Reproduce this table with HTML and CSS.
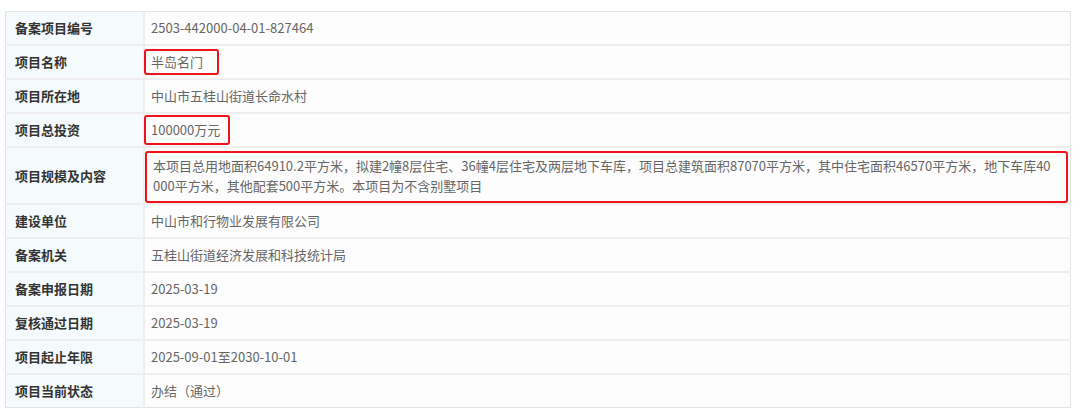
FILE: index.html
```html
<!DOCTYPE html>
<html lang="zh-CN">
<head>
  <meta charset="UTF-8">
  <title>项目备案信息</title>
  <link rel="stylesheet" href="styles.css">
</head>
<body>

  <table class="info-table">
    <tr>
      <th>备案项目编号</th>
      <td>2503-442000-04-01-827464</td>
    </tr>
    <tr>
      <th>项目名称</th>
      <td><span class="mark mark-name">半岛名门</span></td>
    </tr>
    <tr>
      <th>项目所在地</th>
      <td>中山市五桂山街道长命水村</td>
    </tr>
    <tr>
      <th>项目总投资</th>
      <td><span class="mark mark-money">100000万元</span></td>
    </tr>
    <tr class="tall">
      <th>项目规模及内容</th>
      <td class="boxed">
        <div class="mark-block">本项目总用地面积64910.2平方米，拟建2幢8层住宅、36幢4层住宅及两层地下车库，项目总建筑面积87070平方米，其中住宅面积46570平方米，地下车库40000平方米，其他配套500平方米。本项目为不含别墅项目</div>
      </td>
    </tr>
    <tr>
      <th>建设单位</th>
      <td>中山市和行物业发展有限公司</td>
    </tr>
    <tr>
      <th>备案机关</th>
      <td>五桂山街道经济发展和科技统计局</td>
    </tr>
    <tr>
      <th>备案申报日期</th>
      <td>2025-03-19</td>
    </tr>
    <tr>
      <th>复核通过日期</th>
      <td>2025-03-19</td>
    </tr>
    <tr>
      <th>项目起止年限</th>
      <td>2025-09-01至2030-10-01</td>
    </tr>
    <tr>
      <th>项目当前状态</th>
      <td>办结（通过）</td>
    </tr>
  </table>

</body>
</html>
```

FILE: styles.css
```css
body {
  margin: 0;
  padding: 11px 9px 0 5px;
  background: #ffffff;
  font-family: "Noto Sans CJK SC", "Liberation Sans", sans-serif;
  font-size: 13px;
  color: #666;
}

.info-table {
  width: 1066px;
  border-collapse: collapse;
  border: 1px solid #e3e3e3;
}

.info-table th,
.info-table td {
  height: 32px;
  padding: 0 6px;
  border-top: 2px solid #eeeeee;
  text-align: left;
  vertical-align: middle;
  line-height: 20px;
}

.info-table tr:first-child th,
.info-table tr:first-child td {
  border-top: 1px solid #e3e3e3;
}

.info-table th {
  width: 122px;
  padding-left: 9px;
  background: #f5fbfc;
  color: #333;
  font-weight: bold;
  border-right: 2px solid #eeeeee;
}

.info-table td {
  background: #fdfdfd;
}

.info-table tr.tall th,
.info-table tr.tall td {
  height: 51px;
}

.mark {
  display: inline-block;
  margin-left: -7px;
  border: 2px solid #f0141a;
  border-radius: 3px;
  padding: 1px 14px 1px 5px;
}

.mark-money {
  padding-right: 8px;
  padding-top: 3px;
  padding-bottom: 3px;
}

.info-table td.boxed {
  padding: 3px 2px 0 0;
}

.mark-block {
  border: 2px solid #f0141a;
  border-radius: 3px;
  padding: 3px 14px 5px 6px;
  word-break: break-all;
}
```
